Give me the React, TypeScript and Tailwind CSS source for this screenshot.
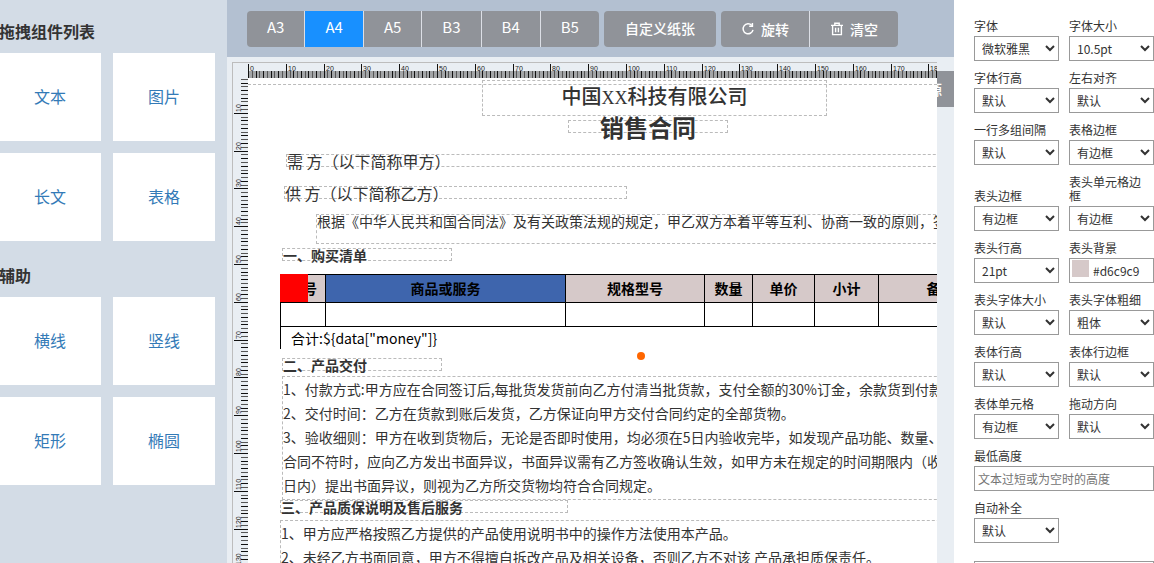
import type { ReactNode } from "react";
import clsx from "clsx";

const MM = 3.78;

const groups = [
  { title: "拖拽组件列表", items: ["文本", "图片", "长文", "表格"] },
  { title: "辅助", items: ["横线", "竖线", "矩形", "椭圆"] },
];

const papers = ["A3", "A4", "A5", "B3", "B4", "B5"];

const options = [
  { label: "字体", value: "微软雅黑" },
  { label: "字体大小", value: "10.5pt" },
  { label: "字体行高", value: "默认" },
  { label: "左右对齐", value: "默认" },
  { label: "一行多组间隔", value: "默认" },
  { label: "表格边框", value: "有边框" },
  { label: "表头边框", value: "有边框" },
  { label: "表头单元格边框", value: "有边框" },
  { label: "表头行高", value: "21pt" },
  { label: "表头背景", value: "#d6c9c9", type: "color" },
  { label: "表头字体大小", value: "默认" },
  { label: "表头字体粗细", value: "粗体" },
  { label: "表体行高", value: "默认" },
  { label: "表体行边框", value: "默认" },
  { label: "表体单元格", value: "有边框" },
  { label: "拖动方向", value: "默认" },
  { label: "最低高度", value: "文本过短或为空时的高度", type: "text" },
  { label: "自动补全", value: "默认" },
];

const columns = ["序号", "商品或服务", "规格型号", "数量", "单价", "小计", "备注"];

function Sidebar() {
  return (
    <aside className="w-[227px] shrink-0 overflow-hidden bg-[#d3dce6] pt-[19px]">
      {groups.map((g) => (
        <section key={g.title} className="mb-[22px] -ml-px pr-3">
          <h2 className="mb-2.5 text-base leading-6 font-bold text-[#333]">{g.title}</h2>
          <div className="grid grid-cols-2 gap-3">
            {g.items.map((name) => (
              <a
                key={name}
                href="#"
                className="flex h-[88px] items-center justify-center bg-white pb-0.5 text-base text-[#337ab7]"
              >
                {name}
              </a>
            ))}
          </div>
        </section>
      ))}
    </aside>
  );
}

function RotateIcon() {
  return (
    <svg width="14" height="14" viewBox="0 0 14 14" fill="none" stroke="currentColor" strokeWidth="1.5">
      <path d="M10.8 3.4A5 5 0 1 0 12 7.8" />
      <path d="M11.4 1v3.2H8.2" />
    </svg>
  );
}

function TrashIcon() {
  return (
    <svg width="14" height="14" viewBox="0 0 14 14" fill="none" stroke="currentColor" strokeWidth="1.4">
      <path d="M1 3.4h12M4.8 3.2V1.2h4.4v2M2.6 3.6v9h8.8v-9M5.6 5.8v4.4M8.4 5.8v4.4" />
    </svg>
  );
}

function Toolbar() {
  return (
    <header className="flex h-[57px] shrink-0 items-center bg-[#b3c0d1] pl-5 text-white">
      <div className="mr-[5px] flex divide-x divide-[#dcdfe6] overflow-hidden rounded">
        {papers.map((p) => (
          <button
            key={p}
            type="button"
            className={clsx("h-9 px-5 pb-0.5 text-[15px]", p === "A4" ? "bg-[#1890ff]" : "bg-[#909399]")}
          >
            {p}
          </button>
        ))}
      </div>
      <button type="button" className="mr-[5px] h-9 rounded bg-[#909399] px-[21px] pb-0.5 text-sm font-medium">
        自定义纸张
      </button>
      <div className="flex divide-x divide-[#dcdfe6] overflow-hidden rounded text-sm font-medium">
        <button type="button" className="flex h-9 items-center gap-1.5 bg-[#909399] px-5">
          <RotateIcon />
          旋转
        </button>
        <button type="button" className="flex h-9 items-center gap-1.5 bg-[#909399] px-5">
          <TrashIcon />
          清空
        </button>
      </div>
    </header>
  );
}

function Ruler({ vertical, length, offset }: { vertical?: boolean; length: number; offset: number }) {
  const ticks = Array.from({ length }, (_, i) => i);
  return (
    <svg
      className={vertical ? "h-full w-[15px]" : "h-[15px] w-full"}
      fontFamily="'Liberation Sans', sans-serif"
      fontSize="7"
      fill="#222"
    >
      {!vertical && <rect x="0" y="8" width="100%" height="7" fill="#a3a5a7" />}
      {ticks.map((i) => {
        const pos = Math.round(offset + i * MM) + 0.5;
        const start = i % 10 === 0 ? 1 : 8;
        const color = i % 10 === 0 || i % 2 === 0 ? "#111" : "#555";
        return vertical ? (
          <line key={i} x1={start} x2="15" y1={pos} y2={pos} stroke={color} />
        ) : (
          <line key={i} x1={pos} x2={pos} y1={start} y2="15" stroke={color} />
        );
      })}
      {ticks
        .filter((i) => i % 10 === 0)
        .map((i) =>
          vertical ? (
            <text key={i} transform={`translate(8 ${Math.round(offset + i * MM) - 1}) rotate(-90)`}>
              {i}
            </text>
          ) : (
            <text key={i} x={Math.round(offset + i * MM) + 2} y="8">
              {i}
            </text>
          )
        )}
    </svg>
  );
}

// an element dropped on the paper, outlined with a dashed border
function Item({ className, children }: { className: string; children?: ReactNode }) {
  return (
    <div className={clsx("absolute border border-dashed border-[#bbb] whitespace-nowrap", className)}>{children}</div>
  );
}

function GoodsTable() {
  return (
    <table className="absolute top-[196px] left-8 w-[722px] table-fixed border-collapse text-sm text-black">
      <colgroup>
        <col className="w-[45px]" />
        <col className="w-[240px]" />
        <col className="w-[139px]" />
        <col className="w-12" />
        <col className="w-[62px]" />
        <col className="w-16" />
        <col className="w-[124px]" />
      </colgroup>
      <thead>
        <tr className="h-7">
          {columns.map((c) => (
            <th
              key={c}
              className={clsx(
                "border border-black p-0 pb-0.5 leading-5 font-bold",
                c === "商品或服务" ? "bg-[#3e65ad]" : "bg-[#d6c9c9]"
              )}
            >
              {c}
            </th>
          ))}
        </tr>
      </thead>
      <tbody>
        <tr className="h-6">
          {columns.map((c) => (
            <td key={c} className="border border-black p-0" />
          ))}
        </tr>
      </tbody>
      <tfoot>
        <tr className="h-[22px]">
          <td colSpan={7} className="border-l border-black p-0 pl-2.5 leading-5">
            合计:${"{"}data["money"]{"}"}
          </td>
        </tr>
      </tfoot>
    </table>
  );
}

function Paper() {
  return (
    <div className="relative flex-1 overflow-hidden bg-white text-sm text-[#333]">
      <div className="absolute inset-x-0 top-1.5 border-t border-dashed border-[#bbb]" />
      <Item className="top-0.5 left-[234px] h-9 w-[345px] text-center text-xl leading-[30px] font-medium">
        中国<span className="font-['Liberation_Serif'] text-lg">XX</span>科技有限公司
      </Item>
      <Item className="top-[42px] left-80 h-[13px] w-40 text-center text-2xl leading-3 font-bold">销售合同</Item>
      <Item className="top-[76px] left-[38px] h-[13px] w-[720px] text-base leading-3">需 方（以下简称甲方）</Item>
      <Item className="top-[108px] left-9 h-[13px] w-[343px] text-base leading-3">供 方（以下简称乙方）</Item>
      <Item className="top-[136px] left-[68px] h-[30px] w-[680px] leading-3">
        根据《中华人民共和国合同法》及有关政策法规的规定，甲乙双方本着平等互利、协商一致的原则，签订本合同。
      </Item>
      <Item className="top-[170px] left-[34px] h-[13px] w-[170px] leading-3 font-bold">一、购买清单</Item>
      <GoodsTable />
      <div className="absolute top-[196px] left-8 size-7 bg-[#f00]" />
      <div className="absolute top-[274px] left-[389px] size-2 rounded-full bg-[#f60]" />
      <Item className="top-[280px] left-[34px] h-[13px] w-40 leading-3 font-bold">二、产品交付</Item>
      <Item className="top-[298px] left-[34px] h-[124px] w-[720px] leading-6">
        <p>1、付款方式:甲方应在合同签订后,每批货发货前向乙方付清当批货款，支付全额的30%订金，余款货到付款。</p>
        <p>2、交付时间：乙方在货款到账后发货，乙方保证向甲方交付合同约定的全部货物。</p>
        <p>3、验收细则：甲方在收到货物后，无论是否即时使用，均必须在5日内验收完毕，如发现产品功能、数量、</p>
        <p>合同不符时，应向乙方发出书面异议，书面异议需有乙方签收确认生效，如甲方未在规定的时间期限内（收</p>
        <p>日内）提出书面异议，则视为乙方所交货物均符合合同规定。</p>
      </Item>
      <Item className="top-[422px] left-8 h-[13px] w-72 leading-3 font-bold">三、产品质保说明及售后服务</Item>
      <Item className="top-[442px] left-8 h-[124px] w-[720px] leading-6">
        <p>1、甲方应严格按照乙方提供的产品使用说明书中的操作方法使用本产品。</p>
        <p>2、未经乙方书面同意，甲方不得擅自拆改产品及相关设备，否则乙方不对该 产品承担质保责任。</p>
      </Item>
    </div>
  );
}

function Designer() {
  return (
    <div className="relative flex flex-1 overflow-hidden bg-[#e9eef3] pt-[5px] pr-[17px] pl-[5px]">
      <button
        type="button"
        className="absolute top-3.5 right-0 h-9 w-10 bg-[#909399] pr-3 text-right text-sm font-medium text-white"
      >
        源
      </button>
      <div className="relative flex min-w-0 flex-1 flex-col border-t border-l border-[#bdbdbd] bg-[#e9eef3]">
        <div className="ml-[15px] h-[15px] overflow-hidden">
          <Ruler length={200} offset={0} />
        </div>
        <div className="flex min-h-0 flex-1">
          <Ruler vertical length={300} offset={-3} />
          <Paper />
        </div>
      </div>
    </div>
  );
}

function Field({ label, value, type }: { label: string; value: string; type?: string }) {
  return (
    <div className={clsx("flex flex-col justify-end gap-[3px]", type === "text" && "col-span-2")}>
      <label htmlFor={label} className="pr-2 leading-3.5">
        {label}
      </label>
      {type === "text" ? (
        <input
          id={label}
          type="text"
          placeholder={value}
          className="h-[25px] w-full border border-[#999] bg-white px-[3px] placeholder:text-[#757575]"
        />
      ) : type === "color" ? (
        <div className="flex h-[25px] items-center border border-[#999] pl-0.5">
          <span className="mr-1 mb-1 size-[17px] shrink-0 bg-[#d6c9c9]" />
          <input id={label} type="text" defaultValue={value} className="w-full min-w-0" />
        </div>
      ) : (
        <select id={label} className="h-[25px] w-full border border-[#999] bg-white pl-[3px]">
          <option>{value}</option>
        </select>
      )}
    </div>
  );
}

function Options() {
  return (
    <aside className="w-[200px] shrink-0 overflow-hidden bg-white pt-[19px] pl-5 text-xs text-[#333]">
      <div className="grid grid-cols-2 gap-2.5">
        {options.map((o) => (
          <Field key={o.label} {...o} />
        ))}
      </div>
      <textarea aria-label="数据" className="mt-[18px] block h-20 w-full border border-[#999]" />
    </aside>
  );
}

export default function App() {
  return (
    <div className="flex h-screen overflow-hidden font-['Noto_Sans_CJK_SC',sans-serif]">
      <Sidebar />
      <main className="flex min-w-0 flex-1 flex-col">
        <Toolbar />
        <Designer />
      </main>
      <Options />
    </div>
  );
}
